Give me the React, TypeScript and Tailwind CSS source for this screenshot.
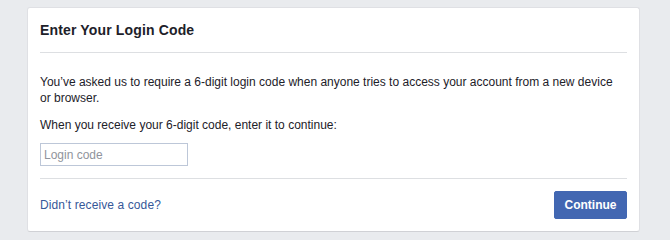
import { useState } from 'react';

const App = () => {
  const [code, setCode] = useState('');

  return (
    <div className="min-h-screen w-[670px] h-[240px] bg-[#e9ebee] pt-[7px] pl-[27px] font-['Liberation_Sans',Arial,sans-serif]">
      <div className="w-[613px] h-[225px] bg-white border border-[#dfe0e4] border-b-[#d0d1d5] rounded-[3px] flex flex-col">
        <div className="mx-3 py-3 border-b border-[#dddfe2]">
          <h2 className="text-[14px] leading-5 font-bold tracking-[0.15px] text-[#1d2129]">Enter Your Login Code</h2>
        </div>

        <div className="mx-3 pt-[21px] pb-3 border-b border-[#dddfe2] text-[12px] leading-4 text-[#1d2129]">
          <p className="max-w-[584px]">
            You’ve asked us to require a 6-digit login code when anyone tries to access your account from a new device
            or browser.
          </p>
          <p className="mt-[11px]">When you receive your 6-digit code, enter it to continue:</p>
          <input
            type="text"
            value={code}
            onChange={(e) => setCode(e.target.value)}
            placeholder="Login code"
            className="mt-[10px] block w-[148px] h-[23px] px-[3px] border border-[#bdc7d8] text-[12px] text-[#1d2129] placeholder:text-[#90949c] outline-none"
          />
        </div>

        <div className="mx-3 py-3 flex justify-between items-center">
          <a href="#" className="text-[12px] tracking-[0.1px] text-[#365899] hover:underline">
            Didn’t receive a code?
          </a>
          <button className="h-7 w-[73px] bg-[#4267b2] border border-[#4267b2] rounded-[2px] text-white text-[12px] font-bold">
            Continue
          </button>
        </div>
      </div>
    </div>
  );
};

export default App;
